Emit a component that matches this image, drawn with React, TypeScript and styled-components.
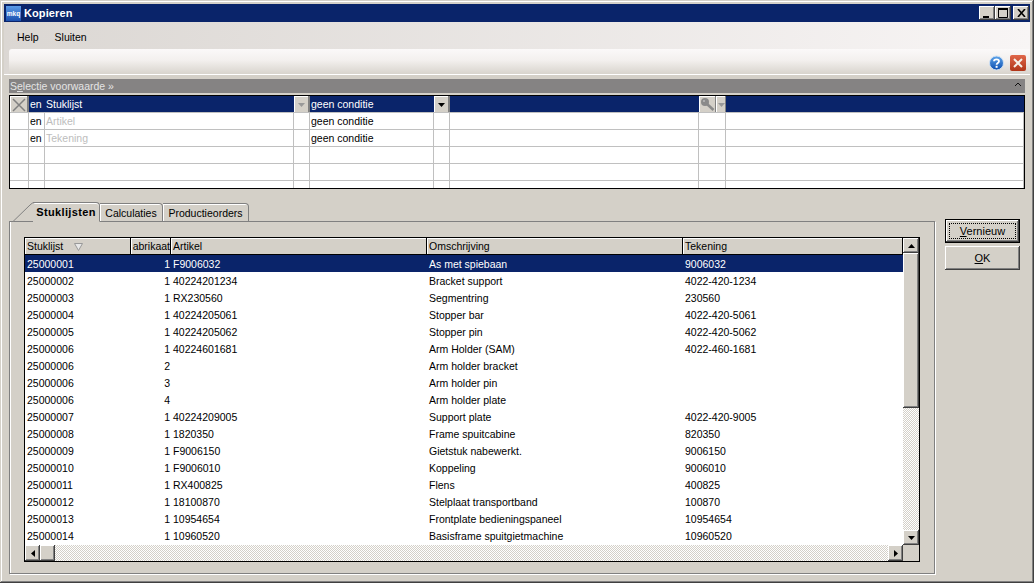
import React from "react";
import styled, { createGlobalStyle } from "styled-components";

const FONT = `"Liberation Sans", Arial, sans-serif`;
const NAVY = "#0a246a";
const FACE = "#d4d0c8";
const BEVEL = `inset -1px -1px #404040, inset 1px 1px #fff, inset -2px -2px #808080`;

const Global = createGlobalStyle`
  html, body { margin: 0; padding: 0; background: ${FACE}; }
  body { font: 10.5px ${FONT}; color: #000; }
  * { box-sizing: border-box; }
`;

const Win = styled.div`
  width: 1034px; height: 583px; overflow: hidden; padding: 4px; background: ${FACE};
  box-shadow: inset -1px -1px #404040, inset 1px 1px ${FACE}, inset -2px -2px #808080, inset 2px 2px #fff;
  display: flex; flex-direction: column;
`;
const TitleBar = styled.div`
  height: 18px; flex: none; background: ${NAVY}; display: flex; align-items: center;
  padding: 0 1px 0 2px;
`;
const AppIcon = styled.div`
  width: 15px; height: 15px; background: linear-gradient(#5b9be8, #1a4fae); color: #fff;
  font: bold 6.5px ${FONT}; display: flex; align-items: center; justify-content: center; overflow: hidden;
`;
const TitleText = styled.div`
  color: #fff; font: bold 11px ${FONT}; margin-left: 3px; flex: 1; letter-spacing: .1px;
`;
const WinBtn = styled.button<{ $gap?: number }>`
  width: 16px; height: 14px; padding: 0; border: 0; background: ${FACE}; box-shadow: ${BEVEL};
  display: flex; align-items: center; justify-content: center; margin-left: ${(p) => p.$gap ?? 0}px;
`;
const MenuBar = styled.div`
  height: 27px; flex: none; display: flex; align-items: center; gap: 16px; padding: 3px 0 0 13px;
  background: linear-gradient(90deg, #dbd7d3, #f8f5f5);
  font-size: 10.5px;
`;
const MenuItem = styled.span``;
const Toolbar = styled.div`
  height: 26px; flex: none; display: flex; border-bottom: 1px solid #fff;
  background: linear-gradient(90deg, #dbd7d3, #f8f5f5);
`;
const ToolStrip = styled.div`
  flex: 1; height: 25px; margin-left: 5px; padding: 2px 4px 0 0; display: flex; align-items: center;
  justify-content: flex-end; gap: 6px; border-radius: 3px 0 0 0;
  background: linear-gradient(#fbf9f9, #f3f0ee 45%, #d8d4cd);
`;
const SectionBar = styled.div`
  height: 14px; flex: none; margin: 4px 5px 0 5px; background: #858383; color: #e4e4e4;
  display: flex; align-items: center; justify-content: space-between; padding: 0 4px 0 1px;
  font-size: 10.5px;
`;
const Collapse = styled.svg`width: 6px; height: 4px; margin-bottom: 4px;`;
const SelGrid = styled.div`
  flex: none; height: 94px; margin: 2px 5px 0 5px; border: 1px solid #000; background: #fff; overflow: hidden;
`;
const SelRow = styled.div<{ $active?: boolean }>`
  display: grid; height: 17px;
  grid-template-columns: 19px 16px 249px 16px 124px 16px 249px 27px 298px;
  background: ${(p) => (p.$active ? NAVY : "#fff")};
  color: ${(p) => (p.$active ? "#fff" : "#000")};
  border-bottom: 1px solid #c0c0c0;
`;
const SelCell = styled.div<{ $active?: boolean; $dim?: boolean }>`
  border-right: 1px solid ${(p) => (p.$active ? "transparent" : "#c0c0c0")};
  padding: 0 0 0 1px; line-height: 16px; white-space: nowrap; overflow: hidden; display: flex;
  color: ${(p) => (p.$dim ? "#bdbdbd" : "inherit")}; font-size: 10.5px;
`;
const IconCell = styled(SelCell)`padding: 0; border-right-color: ${(p) => (p.$active ? "#808080" : "#c0c0c0")};`;
const GridBtn = styled.div<{ $w?: number }>`
  width: ${(p) => (p.$w ? `${p.$w}px` : "100%")}; height: 17px; background: ${FACE};
  box-shadow: inset -1px -1px #808080, inset 1px 1px #fff;
  display: flex; align-items: center; justify-content: center; flex: none;
`;
const Main = styled.div`display: flex; flex: 1; padding-left: 5px; margin-top: 13px; min-height: 0;`;
const TabColumn = styled.div`width: 926px; display: flex; flex-direction: column; flex: none;`;
const TabStrip = styled.div`
  position: relative; z-index: 1; display: flex; height: 20px; flex: none; margin-bottom: -1px; padding-left: 24px;
`;
const TabSlant = styled.svg`position: absolute; left: 0; top: 0; width: 26px; height: 20px;`;
const Tab = styled.div<{ $active?: boolean; $w: number }>`
  width: ${(p) => p.$w}px; height: ${(p) => (p.$active ? 20 : 19)}px; margin-top: ${(p) => (p.$active ? 0 : 1)}px;
  background: ${FACE}; border: 1px solid #808080; border-left: 0;
  border-bottom: ${(p) => (p.$active ? `1px solid ${FACE}` : "1px solid #808080")};
  border-top-right-radius: 4px; text-align: center;
  box-shadow: ${(p) => (p.$active ? "inset 0 1px #fff" : "inset 1px 1px #fff")};
  font: ${(p) => (p.$active ? "bold 11px/18px" : "10.5px/18px")} ${FONT};
  letter-spacing: ${(p) => (p.$active ? ".35px" : "0")};
  white-space: nowrap;
`;
const Panel = styled.div`
  height: 353px; flex: none; border: 1px solid #808080; box-shadow: 1px 1px 0 #fff, inset 1px 0 #fff; padding: 15px 15px 0 14px;
`;
const TableFrame = styled.div`
  width: 896px; height: 325px; border: 1px solid #000; background: #fff;
  display: grid; grid-template-columns: 1fr 16px; grid-template-rows: 1fr 16px;
`;
const TableArea = styled.div`overflow: hidden; min-width: 0;`;
const COLS = "106px 40px 256px 256px 220px";
const HeadRow = styled.div`
  display: grid; grid-template-columns: ${COLS}; height: 17px; background: ${FACE};
  border-bottom: 1px solid #000;
`;
const HeadCell = styled.div<{ $end?: boolean }>`
  border-right: 1px solid #000; box-shadow: inset 1px 1px #fff; padding: 1px 0 0 2px; line-height: 15px; overflow: hidden;
  white-space: nowrap; display: flex; align-items: center; gap: 11px; font-size: 10.5px;
  justify-content: ${(p) => (p.$end ? "flex-end" : "flex-start")};
`;
const DataRow = styled.div<{ $active?: boolean }>`
  display: grid; grid-template-columns: ${COLS}; height: 17px; line-height: 18px;
  background: ${(p) => (p.$active ? NAVY : "#fff")}; color: ${(p) => (p.$active ? "#fff" : "#000")};
`;
const DataCell = styled.div<{ $right?: boolean }>`
  height: 17px;
  padding: ${(p) => (p.$right ? "0 1px 0 0" : "0 0 0 2px")}; text-align: ${(p) => (p.$right ? "right" : "left")};
  white-space: nowrap; overflow: hidden;
`;
const Dither = styled.div<{ $vertical?: boolean }>`
  display: flex; flex-direction: ${(p) => (p.$vertical ? "column" : "row")};
  background: repeating-conic-gradient(#fff 0 25%, ${FACE} 0 50%) 0 0 / 2px 2px;
`;
const Spacer = styled.div`flex: 1;`;
const SbBtn = styled.div<{ $len?: number; $vertical?: boolean }>`
  flex: none; background: ${FACE}; box-shadow: ${BEVEL}; display: flex; align-items: center; justify-content: center;
  width: ${(p) => (p.$vertical ? "100%" : `${p.$len ?? 15}px`)};
  height: ${(p) => (p.$vertical ? `${p.$len ?? 15}px` : "100%")};
`;
const Corner = styled.div`background: ${FACE};`;
const Buttons = styled.div`display: flex; flex-direction: column; gap: 3px; margin: 17px 0 0 10px; flex: none;`;
const PushBtn = styled.button<{ $def?: boolean }>`
  width: 75px; height: 24px; padding: 0; background: ${FACE}; color: #000; font: 11px ${FONT}; position: relative;
  border: ${(p) => (p.$def ? "1px solid #000" : "0")}; 
  box-shadow: ${BEVEL};
  &::after {
    content: ""; display: ${(p) => (p.$def ? "block" : "none")}; position: absolute; inset: 3px;
    border: 1px dotted #000;
  }
`;

const Arrow = ({ dir = "down", color = "#000" }: { dir?: "down" | "up" | "left" | "right"; color?: string }) => {
  const pts = { down: "0,0 7,0 3.5,4", up: "0,4 7,4 3.5,0", left: "4,0 4,7 0,3.5", right: "0,0 0,7 4,3.5" }[dir];
  const vert = dir === "down" || dir === "up";
  return (
    <svg width={vert ? 7 : 4} height={vert ? 4 : 7} viewBox={vert ? "0 0 7 4" : "0 0 4 7"}>
      <polygon points={pts} fill={color} />
    </svg>
  );
};
const HelpIcon = () => (
  <svg width="15" height="16" viewBox="0 0 15 16">
    <defs>
      <linearGradient id="hg" x1="0" y1="0" x2="0" y2="1">
        <stop offset="0" stopColor="#5ea4ea" />
        <stop offset="1" stopColor="#0d4fb0" />
      </linearGradient>
    </defs>
    <circle cx="7.5" cy="8" r="7" fill="url(#hg)" stroke="#cfe0f2" />
    <path d="M5 6.2C5 3.8 10 3.8 10 6.2C10 8 7.6 8 7.6 9.8" fill="none" stroke="#fff" strokeWidth="1.8" />
    <rect x="6.6" y="10.8" width="2" height="2" fill="#fff" />
  </svg>
);
const CloseIcon = () => (
  <svg width="16" height="16" viewBox="0 0 16 16">
    <defs>
      <linearGradient id="cg" x1="0" y1="0" x2="0" y2="1">
        <stop offset="0" stopColor="#e0674a" />
        <stop offset="1" stopColor="#b03518" />
      </linearGradient>
    </defs>
    <rect x="0" y="0" width="16" height="16" rx="2" fill="url(#cg)" />
    <path d="M4 4L12 12M12 4L4 12" stroke="#f6f0e8" strokeWidth="2" />
  </svg>
);
const KeyIcon = () => (
  <svg width="16" height="15" viewBox="0 0 16 15">
    <circle cx="5" cy="5" r="4" fill="#8a8a8a" />
    <path d="M7 7L13.5 13" stroke="#8a8a8a" strokeWidth="2.6" />
    <circle cx="4" cy="4" r="1" fill="#b8b8b8" />
  </svg>
);
const CrossIcon = () => (
  <svg width="14" height="14" viewBox="0 0 14 14">
    <path d="M1 1L13 13M13 1L1 13" stroke="#808080" strokeWidth="1.5" />
  </svg>
);
const FilterIcon = () => (
  <svg width="9" height="8" viewBox="0 0 9 8">
    <path d="M0.5 0.5H8.5L4.5 7.5Z" fill="#e8e8e8" stroke="#999" />
  </svg>
);

const ROWS: [string, string, string, string, string, boolean?][] = [
  ["25000001", "1", "F9006032", "As met spiebaan", "9006032", true],
  ["25000002", "1", "40224201234", "Bracket support", "4022-420-1234"],
  ["25000003", "1", "RX230560", "Segmentring", "230560"],
  ["25000004", "1", "40224205061", "Stopper bar", "4022-420-5061"],
  ["25000005", "1", "40224205062", "Stopper pin", "4022-420-5062"],
  ["25000006", "1", "40224601681", "Arm Holder (SAM)", "4022-460-1681"],
  ["25000006", "2", "", "Arm holder bracket", ""],
  ["25000006", "3", "", "Arm holder pin", ""],
  ["25000006", "4", "", "Arm holder plate", ""],
  ["25000007", "1", "40224209005", "Support plate", "4022-420-9005"],
  ["25000008", "1", "1820350", "Frame spuitcabine", "820350"],
  ["25000009", "1", "F9006150", "Gietstuk nabewerkt.", "9006150"],
  ["25000010", "1", "F9006010", "Koppeling", "9006010"],
  ["25000011", "1", "RX400825", "Flens", "400825"],
  ["25000012", "1", "18100870", "Stelplaat transportband", "100870"],
  ["25000013", "1", "10954654", "Frontplate bedieningspaneel", "10954654"],
  ["25000014", "1", "10960520", "Basisframe spuitgietmachine", "10960520"],
];

const SEL = [
  { en: "en", field: "Stuklijst", cond: "geen conditie", active: true },
  { en: "en", field: "Artikel", cond: "geen conditie", dim: true },
  { en: "en", field: "Tekening", cond: "geen conditie", dim: true },
  { en: "", field: "", cond: "" },
  { en: "", field: "", cond: "" },
  { en: "", field: "", cond: "" },
];

export default function App() {
  return (
    <>
      <Global />
      <Win>
        <TitleBar>
          <AppIcon>mkq</AppIcon>
          <TitleText>Kopieren</TitleText>
          <WinBtn>
            <svg width="8" height="9" viewBox="0 0 8 9"><rect x="0" y="7" width="6" height="2" fill="#000" /></svg>
          </WinBtn>
          <WinBtn>
            <svg width="10" height="10" viewBox="0 0 10 10"><path d="M.5 1.5H9.5V9.5H.5Z" fill="none" stroke="#000" /><rect x="0" y="0" width="10" height="2" fill="#000" /></svg>
          </WinBtn>
          <WinBtn $gap={2}>
            <svg width="9" height="8" viewBox="0 0 9 8"><path d="M1 0L8 8M8 0L1 8" stroke="#000" strokeWidth="1.6" /></svg>
          </WinBtn>
        </TitleBar>
        <MenuBar>
          <MenuItem>Help</MenuItem>
          <MenuItem>Sluiten</MenuItem>
        </MenuBar>
        <Toolbar>
          <ToolStrip>
            <HelpIcon />
            <CloseIcon />
          </ToolStrip>
        </Toolbar>
        <SectionBar>
          <span>S<u>e</u>lectie voorwaarde »</span>
          <Collapse viewBox="0 0 6 4"><path d="M0 4L3 1L6 4" fill="none" stroke="#111" /></Collapse>
        </SectionBar>
        <SelGrid>
          {SEL.map((r, i) => (
            <SelRow key={i} $active={r.active}>
              <IconCell $active={r.active}>{r.active && <GridBtn><CrossIcon /></GridBtn>}</IconCell>
              <SelCell $active={r.active}>{r.en}</SelCell>
              <SelCell $active={r.active} $dim={r.dim}>{r.field}</SelCell>
              <IconCell $active={r.active}>{r.active && <GridBtn><Arrow color="#999" /></GridBtn>}</IconCell>
              <SelCell $active={r.active}>{r.cond}</SelCell>
              <IconCell $active={r.active}>{r.active && <GridBtn><Arrow /></GridBtn>}</IconCell>
              <SelCell $active={r.active} />
              <IconCell $active={r.active}>
                {r.active && (
                  <>
                    <GridBtn $w={17}><KeyIcon /></GridBtn>
                    <GridBtn $w={10}><Arrow color="#999" /></GridBtn>
                  </>
                )}
              </IconCell>
              <SelCell $active={r.active} />
            </SelRow>
          ))}
        </SelGrid>
        <Main>
          <TabColumn>
            <TabStrip>
              <TabSlant viewBox="0 0 26 20">
                <path d="M0.5 20V19.5H4L21 3Q23 .5 26 .5" fill={FACE} stroke="#808080" />
              </TabSlant>
              <Tab $active $w={67}>Stuklijsten</Tab>
              <Tab $w={63}>Calculaties</Tab>
              <Tab $w={86}>Productieorders</Tab>
            </TabStrip>
            <Panel>
              <TableFrame>
                <TableArea>
                  <HeadRow>
                    <HeadCell>Stuklijst <FilterIcon /></HeadCell>
                    <HeadCell $end>abrikaat</HeadCell>
                    <HeadCell>Artikel</HeadCell>
                    <HeadCell>Omschrijving</HeadCell>
                    <HeadCell>Tekening</HeadCell>
                  </HeadRow>
                  {ROWS.map((r, i) => (
                    <DataRow key={i} $active={r[5]}>
                      <DataCell>{r[0]}</DataCell>
                      <DataCell $right>{r[1]}</DataCell>
                      <DataCell>{r[2]}</DataCell>
                      <DataCell>{r[3]}</DataCell>
                      <DataCell>{r[4]}</DataCell>
                    </DataRow>
                  ))}
                </TableArea>
                <Dither $vertical>
                  <SbBtn $vertical><Arrow dir="up" /></SbBtn>
                  <SbBtn $vertical $len={155} />
                  <Spacer />
                  <SbBtn $vertical><Arrow /></SbBtn>
                </Dither>
                <Dither>
                  <SbBtn><Arrow dir="left" /></SbBtn>
                  <SbBtn />
                  <Spacer />
                  <SbBtn><Arrow dir="right" /></SbBtn>
                </Dither>
                <Corner />
              </TableFrame>
            </Panel>
          </TabColumn>
          <Buttons>
            <PushBtn $def><u>V</u>ernieuw</PushBtn>
            <PushBtn><u>O</u>K</PushBtn>
          </Buttons>
        </Main>
      </Win>
    </>
  );
}
